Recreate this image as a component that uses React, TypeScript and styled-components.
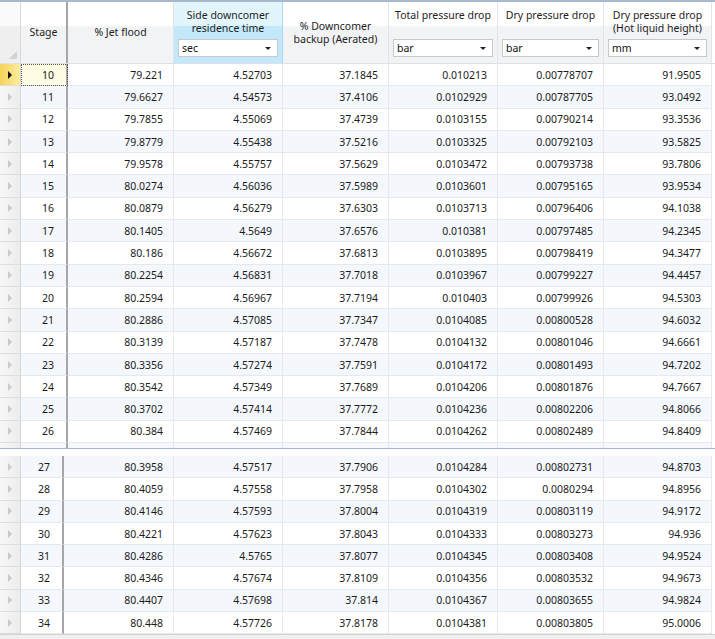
import * as React from "react";
import styled, { createGlobalStyle } from "styled-components";

const FONT = `"Noto Sans", "Open Sans", sans-serif`;
const TOP_COLUMNS = "21px 47px 106px 109px 106px 109px 106px 108px 3px";
const BOTTOM_COLUMNS = "21px 43px 110px 109px 106px 109px 106px 108px 3px";
const ROW_HEIGHT = 22.3;

type Row = [number, string, string, string, string, string, string];

const topRows: Row[] = [
  [10, "79.221", "4.52703", "37.1845", "0.010213", "0.00778707", "91.9505"],
  [11, "79.6627", "4.54573", "37.4106", "0.0102929", "0.00787705", "93.0492"],
  [12, "79.7855", "4.55069", "37.4739", "0.0103155", "0.00790214", "93.3536"],
  [13, "79.8779", "4.55438", "37.5216", "0.0103325", "0.00792103", "93.5825"],
  [14, "79.9578", "4.55757", "37.5629", "0.0103472", "0.00793738", "93.7806"],
  [15, "80.0274", "4.56036", "37.5989", "0.0103601", "0.00795165", "93.9534"],
  [16, "80.0879", "4.56279", "37.6303", "0.0103713", "0.00796406", "94.1038"],
  [17, "80.1405", "4.5649", "37.6576", "0.010381", "0.00797485", "94.2345"],
  [18, "80.186", "4.56672", "37.6813", "0.0103895", "0.00798419", "94.3477"],
  [19, "80.2254", "4.56831", "37.7018", "0.0103967", "0.00799227", "94.4457"],
  [20, "80.2594", "4.56967", "37.7194", "0.010403", "0.00799926", "94.5303"],
  [21, "80.2886", "4.57085", "37.7347", "0.0104085", "0.00800528", "94.6032"],
  [22, "80.3139", "4.57187", "37.7478", "0.0104132", "0.00801046", "94.6661"],
  [23, "80.3356", "4.57274", "37.7591", "0.0104172", "0.00801493", "94.7202"],
  [24, "80.3542", "4.57349", "37.7689", "0.0104206", "0.00801876", "94.7667"],
  [25, "80.3702", "4.57414", "37.7772", "0.0104236", "0.00802206", "94.8066"],
  [26, "80.384", "4.57469", "37.7844", "0.0104262", "0.00802489", "94.8409"],
];

const bottomRows: Row[] = [
  [27, "80.3958", "4.57517", "37.7906", "0.0104284", "0.00802731", "94.8703"],
  [28, "80.4059", "4.57558", "37.7958", "0.0104302", "0.0080294", "94.8956"],
  [29, "80.4146", "4.57593", "37.8004", "0.0104319", "0.00803119", "94.9172"],
  [30, "80.4221", "4.57623", "37.8043", "0.0104333", "0.00803273", "94.936"],
  [31, "80.4286", "4.5765", "37.8077", "0.0104345", "0.00803408", "94.9524"],
  [32, "80.4346", "4.57674", "37.8109", "0.0104356", "0.00803532", "94.9673"],
  [33, "80.4407", "4.57698", "37.814", "0.0104367", "0.00803655", "94.9824"],
  [34, "80.448", "4.57726", "37.8178", "0.0104381", "0.00803805", "95.0006"],
];

const GlobalStyle = createGlobalStyle`
  html, body {
    margin: 0;
    padding: 0;
    background: #ffffff;
  }
  body {
    font-family: ${FONT};
    color: #1b1b1b;
  }
`;

const App: React.FC = () => {
  const renderRows = (rows: Row[], columns: string, current?: number) =>
    rows.map((row) => {
      const [stage, ...values] = row;
      const isCurrent = stage === current;
      return (
        <DataRow key={stage} $columns={columns} $alt={stage % 2 === 1}>
          <RowHead $current={isCurrent}>
            <Arrow $current={isCurrent} />
          </RowHead>
          <Cell $frozen $focused={isCurrent}>
            {stage}
          </Cell>
          {values.map((v, i) => (
            <Cell key={i}>{v}</Cell>
          ))}
          <EdgeCell />
        </DataRow>
      );
    });

  return (
    <>
      <GlobalStyle />
      <Frame>
        <TopPane>
          <HeaderRow $columns={TOP_COLUMNS}>
            <Corner>
              <Grip />
            </Corner>
            <HeaderCell $frozen>Stage</HeaderCell>
            <HeaderCell>% Jet flood</HeaderCell>
            <HeaderCell $selected $withUnit>
              <Title>
                Side downcomer
                <br />
                residence time
              </Title>
              <Combo>
                sec
                <Caret />
              </Combo>
            </HeaderCell>
            <HeaderCell>
              % Downcomer
              <br />
              backup (Aerated)
            </HeaderCell>
            <HeaderCell $withUnit>
              <Title>Total pressure drop</Title>
              <Combo>
                bar
                <Caret />
              </Combo>
            </HeaderCell>
            <HeaderCell $withUnit>
              <Title>Dry pressure drop</Title>
              <Combo>
                bar
                <Caret />
              </Combo>
            </HeaderCell>
            <HeaderCell $withUnit>
              <Title>
                Dry pressure drop
                <br />
                (Hot liquid height)
              </Title>
              <Combo>
                mm
                <Caret />
              </Combo>
            </HeaderCell>
            <HeaderEdge />
          </HeaderRow>
          {renderRows(topRows, TOP_COLUMNS, 10)}
          {/* the next row peeks in under the splitter, its text hidden */}
          <DataRow $columns={TOP_COLUMNS} $alt>
            <RowHead $current={false} />
            <Cell $frozen />
            {[0, 1, 2, 3, 4, 5].map((i) => (
              <Cell key={i} />
            ))}
            <EdgeCell />
          </DataRow>
        </TopPane>
        <Splitter />
        <BottomPane>{renderRows(bottomRows, BOTTOM_COLUMNS)}</BottomPane>
        <Filler />
      </Frame>
    </>
  );
};

export default App;

const Frame = styled.div`
  display: flex;
  flex-direction: column;
  width: 715px;
  height: 639px;
  overflow: hidden;
  background: #ffffff;
`;

const TopPane = styled.div`
  flex: none;
  height: 449px;
  overflow: hidden;
  box-sizing: border-box;
  border-bottom: 1px solid #a6b7cd;
`;

const Splitter = styled.div`
  flex: none;
  height: 7px;
  background: #ffffff;
`;

const BottomPane = styled.div`
  flex: none;
`;

const Filler = styled.div`
  flex: 1;
  background: #f0f0f0;
  border-top: 1px solid #d3d3d3;
`;

const HeaderRow = styled.div<{ $columns: string }>`
  display: grid;
  grid-template-columns: ${(p) => p.$columns};
  height: 64px;
  box-sizing: border-box;
  border-top: 2px solid #a9b8cc;
  border-bottom: 1px solid #dce1e7;
`;

const Corner = styled.div`
  display: flex;
  align-items: flex-end;
  justify-content: flex-end;
  padding: 0 3px 4px 0;
  background: linear-gradient(#fafafa 0, #fafafa 40%, #efefef 40%, #efefef 100%);
  border-right: 1px solid #dadada;
`;

const Grip = styled.span`
  width: 0;
  height: 0;
  border-left: 8px solid transparent;
  border-bottom: 8px solid #d2d2d2;
`;

const HeaderCell = styled.div<{
  $selected?: boolean;
  $frozen?: boolean;
  $withUnit?: boolean;
}>`
  display: flex;
  flex-direction: column;
  align-items: center;
  justify-content: ${(p) => (p.$withUnit ? "flex-start" : "center")};
  padding: ${(p) => (p.$withUnit ? "7px 4px 6px" : "0 4px")};
  min-width: 0;
  box-sizing: border-box;
  text-align: center;
  font-size: 10.5px;
  line-height: 13px;
  color: #1e1e1e;
  background: ${(p) =>
    p.$selected
      ? "linear-gradient(#e2f5fd 0, #e2f5fd 40%, #c2e8f9 40%, #c2e8f9 100%)"
      : "linear-gradient(#ffffff 0, #ffffff 40%, #f2f3f5 40%, #f2f3f5 100%)"};
  border-right: ${(p) =>
    p.$frozen
      ? "2px solid #a6a6a6"
      : p.$selected
      ? "1px solid #a9d7ef"
      : "1px solid #e2e4e7"};
`;

const HeaderEdge = styled.div`
  background: #ffffff;
`;

const Title = styled.div`
  min-height: 26px;
  white-space: nowrap;
`;

const Combo = styled.div`
  margin-top: auto;
  width: 100%;
  height: 18px;
  box-sizing: border-box;
  display: flex;
  align-items: center;
  justify-content: space-between;
  padding: 0 6px 0 3px;
  background: #ffffff;
  border: 1px solid #c5c8cc;
  font-size: 10.5px;
  color: #111111;
`;

const Caret = styled.span`
  width: 0;
  height: 0;
  border-left: 3px solid transparent;
  border-right: 3px solid transparent;
  border-top: 3px solid #222222;
`;

const DataRow = styled.div<{ $columns: string; $alt: boolean }>`
  display: grid;
  grid-template-columns: ${(p) => p.$columns};
  height: ${ROW_HEIGHT}px;
  background: ${(p) => (p.$alt ? "#f4f7fc" : "#ffffff")};
`;

const RowHead = styled.div<{ $current: boolean }>`
  display: flex;
  align-items: center;
  padding-left: 8px;
  box-sizing: border-box;
  background: ${(p) =>
    p.$current
      ? "linear-gradient(to right, #f6d358, #fcec9f)"
      : "linear-gradient(to right, #f7f7f7, #ececec)"};
  border-bottom: 1px solid #dddddd;
  border-right: 1px solid #d6d6d6;
`;

const Arrow = styled.span<{ $current: boolean }>`
  width: 0;
  height: 0;
  border-top: 4px solid transparent;
  border-bottom: 4px solid transparent;
  border-left: 4px solid ${(p) => (p.$current ? "#111111" : "#c9c9c9")};
`;

const Cell = styled.div<{ $frozen?: boolean; $focused?: boolean }>`
  display: flex;
  align-items: center;
  justify-content: flex-end;
  min-width: 0;
  box-sizing: border-box;
  padding-right: ${(p) => (p.$frozen ? "12px" : "10px")};
  font-size: 10.5px;
  color: #1b1b1b;
  white-space: nowrap;
  border-bottom: 1px solid #e4e9f0;
  border-right: ${(p) => (p.$frozen ? "2px solid #a6a6a6" : "1px solid #e6e9ee")};
  background: ${(p) => (p.$focused ? "#fffde3" : "transparent")};
  outline: ${(p) => (p.$focused ? "1px dotted #555555" : "none")};
  outline-offset: -1px;
`;

const EdgeCell = styled.div`
  background: #ffffff;
`;
